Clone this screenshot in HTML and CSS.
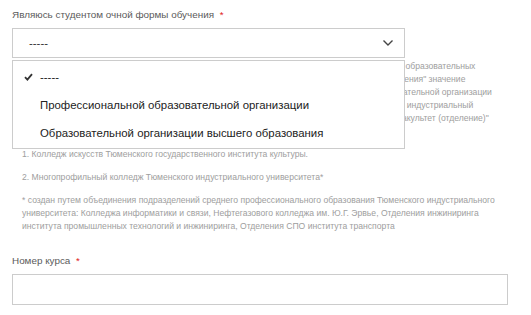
FILE: index.html
```html
<!DOCTYPE html>
<html lang="ru">

<head>
    <meta charset="UTF-8">
    <meta name="viewport" content="width=device-width, initial-scale=1.0">
    <title>Анкета студента</title>
    <link rel="stylesheet" href="styles.css">
</head>

<body>
    <form class="form">
        <div class="field">
            <label class="field-label">Являюсь студентом очной формы обучения <span class="req">*</span></label>
            <div class="select-wrap">
                <div class="select">
                    <span class="select-value">-----</span>
                    <svg class="chevron" width="12" height="8" viewBox="0 0 12 8">
                        <path d="M1.5 1.5 L6 6 L10.5 1.5" fill="none" stroke="#444" stroke-width="1.4" />
                    </svg>
                </div>
                <!-- open list of the select -->
                <ul class="dropdown">
                    <li class="option selected">
                        <svg class="check" width="9" height="8" viewBox="0 0 9 8">
                            <path d="M1 4.2 L3.4 6.6 L8 1.2" fill="none" stroke="#333" stroke-width="1.8" />
                        </svg>
                        -----
                    </li>
                    <li class="option">Профессиональной образовательной организации</li>
                    <li class="option">Образовательной организации высшего образования</li>
                </ul>
            </div>
            <div class="hint">
                <p>Если вы учитесь в одном из перечисленных ниже колледжей, выберите в поле "Наименование образовательных<br>
                    учреждений" значение "Колледж", в поле "Уровень" значение "СПО", затем в поле "Форма обучения" значение<br>
                    "Очная", а затем ниже в поле "Тип учебного заведения" значение "Профессиональной образовательной организации<br>
                    ", в поле "Наименование организации" обязательно выберите значение "ФГБОУ ВО Тюменский индустриальный<br>
                    университет", а в поле "Структурное подразделение" – укажите значение "Колледж", а поле "Факультет (отделение)"<br>
                    оставьте пустым.</p>
                <p>1. Колледж искусств Тюменского государственного института культуры.</p>
                <p>2. Многопрофильный колледж Тюменского индустриального университета*</p>
                <p>* создан путем объединения подразделений среднего профессионального образования Тюменского индустриального<br>
                    университета: Колледжа информатики и связи, Нефтегазового колледжа им. Ю.Г. Эрвье, Отделения инжиниринга<br>
                    института промышленных технологий и инжиниринга, Отделения СПО института транспорта</p>
            </div>
        </div>
        <div class="field">
            <label class="field-label">Номер курса <span class="req">*</span></label>
            <input type="text" class="text-input">
        </div>
    </form>
</body>

</html>
```

FILE: styles.css
```css
body {
    margin: 0;
    font-family: 'Liberation Sans', Arial, sans-serif;
    background-color: #fff;
}

.form {
    padding: 8px 0 0 12px;
}

.field {
    margin-bottom: 21px;
}

.field-label {
    display: block;
    font-size: 9.9px;
    line-height: 14px;
    color: #5a5a5a;
    margin-bottom: 6px;
}

.req {
    color: #e02020;
    margin-left: 3px;
}

.select-wrap {
    position: relative;
    width: 393px;
}

.select {
    box-sizing: border-box;
    height: 30px;
    border: 1px solid #ccc;
    display: flex;
    align-items: center;
    justify-content: space-between;
    padding: 0 10px 0 16px;
}

.select-value {
    font-size: 11.4px;
    color: #333;
}

.chevron {
    display: block;
}

.dropdown {
    position: absolute;
    top: 32px;
    left: 0;
    right: 0;
    margin: 0;
    padding: 2px 0 1px;
    list-style: none;
    background-color: #fff;
    border: 1px solid #ccc;
    z-index: 10;
}

.option {
    position: relative;
    height: 28px;
    line-height: 28px;
    padding-left: 27px;
    font-size: 11.4px;
    color: #222;
}

.check {
    position: absolute;
    left: 11px;
    top: 10px;
}

.hint {
    margin-top: 2px;
    padding-left: 10px;
    font-size: 8.6px;
    line-height: 13px;
    color: #9e9e9e;
}

.hint p {
    margin: 0 0 10px;
    white-space: nowrap;
}

.hint p:last-child {
    margin-bottom: 0;
}

.text-input {
    display: block;
    box-sizing: border-box;
    width: 496px;
    height: 31px;
    margin: 0;
    border: 1px solid #ccc;
    padding: 0 10px;
}
```
